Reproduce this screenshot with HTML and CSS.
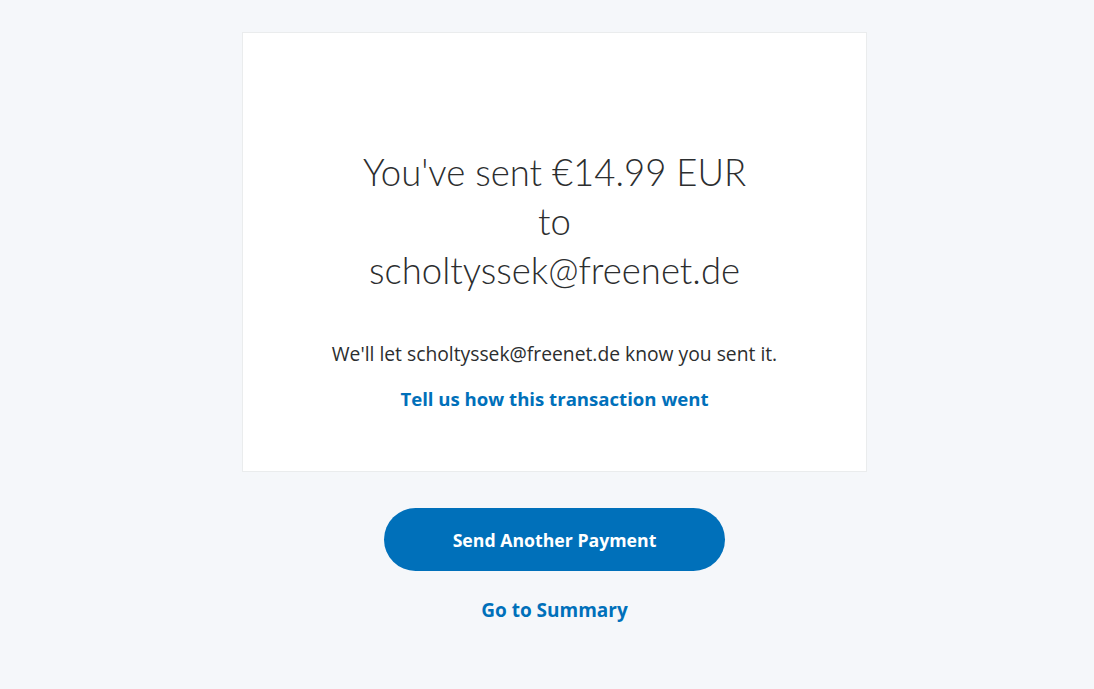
FILE: index.html
```html
<!DOCTYPE html>
<html lang="en">
<head>
<meta charset="utf-8">
<title>Payment sent</title>
<link rel="stylesheet" href="styles.css">
</head>
<body>
<main class="page">
  <section class="card">
    <h1 class="title">You've sent €14.99 EUR<br>to<br>scholtyssek@freenet.de</h1>
    <p class="note">We'll let scholtyssek@freenet.de know you sent it.</p>
    <a class="link feedback" href="#">Tell us how this transaction went</a>
  </section>
  <div class="actions">
    <a class="btn-primary" href="#">Send Another Payment</a>
    <a class="link summary" href="#">Go to Summary</a>
  </div>
</main>
</body>
</html>
```
FILE: styles.css
```css
html, body {
  margin: 0;
  padding: 0;
}
body {
  background: #f5f7fa;
  font-family: "Open Sans", sans-serif;
  color: #2c2e2f;
  width: 1094px;
  height: 689px;
  overflow: hidden;
}
.page {
  display: flex;
  flex-direction: column;
  align-items: center;
  padding-top: 32px;
  padding-left: 15px;
}
.card {
  box-sizing: border-box;
  width: 625px;
  height: 440px;
  background: #ffffff;
  border: 1px solid #eaeced;
  display: flex;
  flex-direction: column;
  align-items: center;
  padding-top: 115px;
}
.title {
  margin: 0;
  font-family: "Lato", sans-serif;
  font-weight: 300;
  font-size: 36.5px;
  line-height: 49px;
  text-align: center;
  color: #2c2e2f;
}
.note {
  margin: 47px 0 0;
  font-size: 19.3px;
  line-height: 24px;
  color: #2c2e2f;
}
.link {
  color: #0070ba;
  text-decoration: none;
  font-weight: 700;
  font-size: 18.6px;
}
.feedback {
  margin-top: 20px;
}
.actions {
  display: flex;
  flex-direction: column;
  align-items: center;
  margin-top: 36px;
}
.btn-primary {
  width: 341px;
  height: 63px;
  border-radius: 32px;
  background: #0070ba;
  color: #ffffff;
  font-weight: 700;
  font-size: 17.7px;
  text-decoration: none;
  display: flex;
  align-items: center;
  justify-content: center;
}
.summary {
  margin-top: 26px;
  font-size: 19px;
}
```
